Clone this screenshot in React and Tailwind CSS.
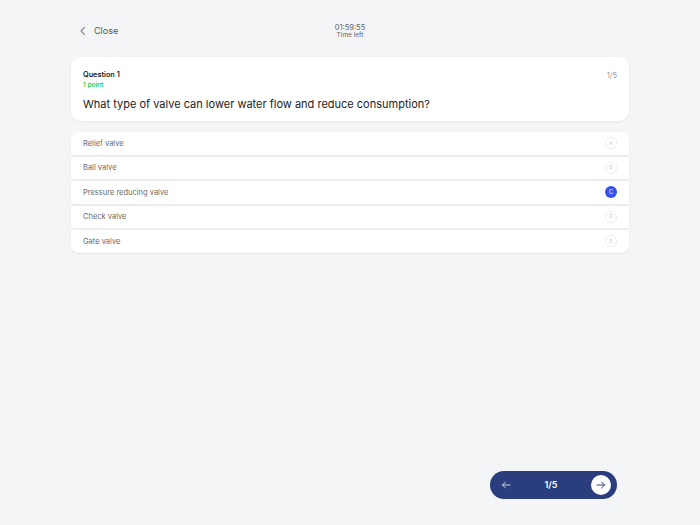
import React, { useState } from 'react'

const OPTIONS = [
  { key: 'A', label: 'Relief valve' },
  { key: 'B', label: 'Ball valve' },
  { key: 'C', label: 'Pressure reducing valve' },
  { key: 'D', label: 'Check valve' },
  { key: 'E', label: 'Gate valve' }
]

const App = () => {
  const [selected, setSelected] = useState('C')

  return (
    <div className="min-h-screen w-full bg-[#f4f5f7] font-['Inter',sans-serif] flex flex-col">
      {/* header */}
      <div className="h-[57px] px-[71px] grid grid-cols-3 items-center">
        <button className="flex items-center gap-[6px] text-[#555] pl-[7px] pt-[5px]">
          <svg width="10" height="10" viewBox="0 0 10 10" fill="none" stroke="#888" strokeWidth="1.1" strokeLinecap="round" strokeLinejoin="round">
            <path d="M6.5 1.5 3 5l3.5 3.5" />
          </svg>
          <span className="text-[9px]">Close</span>
        </button>
        <div className="flex flex-col items-center leading-none text-[#666] pt-[5px]">
          <span className="text-[7.5px]">01:59:55</span>
          <span className="text-[6.5px] mt-[1px]">Time left</span>
        </div>
        <div />
      </div>

      <div className="px-[71px]">
        {/* question card */}
        <div className="h-[64px] bg-white rounded-[10px] shadow-[0_1px_3px_rgba(0,0,0,0.06)] px-3 pt-[14px] flex justify-between">
          <div>
            <div className="text-[7.3px] font-semibold text-[#222] leading-none">Question 1</div>
            <div className="text-[6.5px] font-semibold text-[#34c759] mt-[4px] leading-none">1 point</div>
            <div className="text-[11px] text-[#222] mt-[9px] leading-tight">What type of valve can lower water flow and reduce consumption?</div>
          </div>
          <div className="text-[7.5px] text-[#999] leading-none pt-[1px]">1/5</div>
        </div>

        {/* options */}
        <div className="mt-[11px] flex flex-col gap-[2px]">
          {OPTIONS.map((o, i) => (
            <button
              key={o.key}
              onClick={() => setSelected(o.key)}
              className={
                'h-[22.5px] bg-white flex items-center justify-between px-3 text-left shadow-[0_1px_2px_rgba(0,0,0,0.07)] ' +
                (i === 0 ? 'rounded-t-[8px]' : i === OPTIONS.length - 1 ? 'rounded-b-[8px]' : '')
              }
            >
              <span className="text-[7.5px] text-[#6a6a6a]">{o.label}</span>
              <span
                className={
                  o.key === selected
                    ? 'w-[12px] h-[12px] rounded-full bg-[#3651f2] text-white text-[5.5px] flex items-center justify-center'
                    : 'w-[12px] h-[12px] rounded-full border border-[#eee] text-[#ccc] text-[5px] flex items-center justify-center'
                }
              >
                {o.key}
              </span>
            </button>
          ))}
        </div>
      </div>

      <div className="flex-1" />

      {/* pager */}
      <div className="flex justify-end pr-[83px] pb-[26px]">
        <div className="w-[127px] h-[28px] rounded-full bg-[#2a3e7e] flex items-center justify-between pl-[11px] pr-[6px]">
          <svg width="10" height="10" viewBox="0 0 10 10" fill="none" stroke="#c9d0e6" strokeWidth="1" strokeLinecap="round" strokeLinejoin="round">
            <path d="M9 5H1.5M4.5 2 1.5 5l3 3" />
          </svg>
          <span className="text-[9px] font-semibold text-white">1/5</span>
          <span className="w-[20px] h-[20px] rounded-full bg-white flex items-center justify-center">
            <svg width="10" height="10" viewBox="0 0 10 10" fill="none" stroke="#2a3e7e" strokeWidth="1" strokeLinecap="round" strokeLinejoin="round">
              <path d="M1 5h7.5M5.5 2l3 3-3 3" />
            </svg>
          </span>
        </div>
      </div>
    </div>
  )
}

export default App
